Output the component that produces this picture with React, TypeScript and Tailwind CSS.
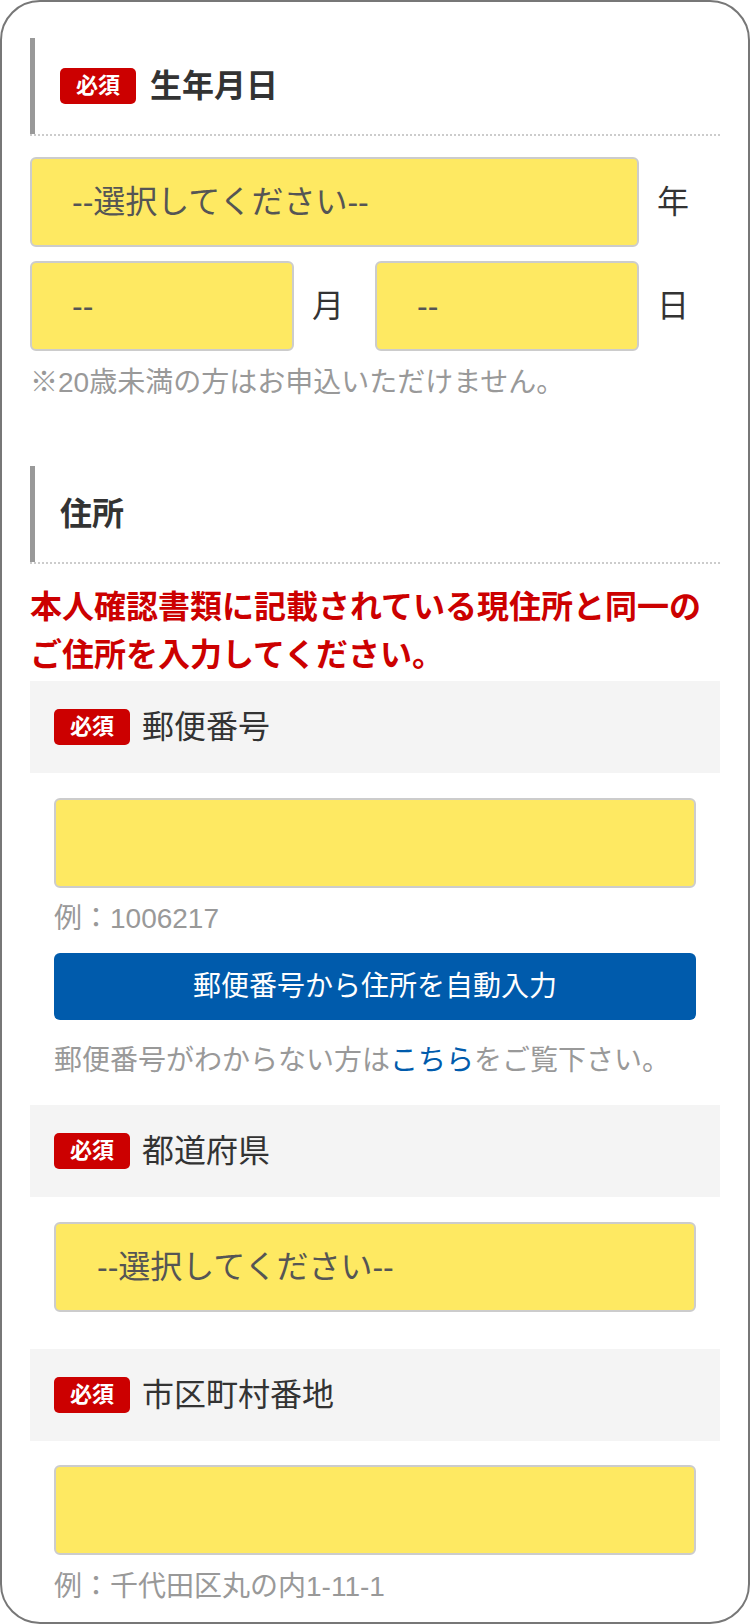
const FONT = { fontFamily: '"Liberation Sans", "Noto Sans CJK JP", sans-serif' };

const Badge = () => (
  <span className="flex h-[36px] w-[76px] shrink-0 items-center justify-center rounded-[5px] bg-[#cc0000] text-[22px] font-bold leading-none text-white">
    必須
  </span>
);

const SectionHeading = ({ title, required }: { title: string; required?: boolean }) => (
  <div className="flex border-b-2 border-dotted border-[#cccccc]">
    <div className="w-[5px] shrink-0 bg-[#999999]" />
    <div className="flex h-[96px] items-center gap-[14px] pl-[25px]">
      {required && <Badge />}
      <span className="text-[32px] font-bold text-[#333333]">{title}</span>
    </div>
  </div>
);

const Field = ({ text, pad = "pl-[40px]" }: { text?: string; pad?: string }) => (
  <div className={`flex h-[90px] min-w-0 flex-1 items-center rounded-[6px] border-2 border-[#cccccc] bg-[#fee962] ${pad} text-[32px] text-[#555555]`}>
    {text}
  </div>
);

const Unit = ({ label }: { label: string }) => (
  <span className="w-[81px] shrink-0 pl-[18px] text-[32px] text-[#333333]">{label}</span>
);

const ItemHeader = ({ label }: { label: string }) => (
  <div className="flex h-[92px] items-center gap-[12px] bg-[#f4f4f4] px-[24px]">
    <Badge />
    <span className="text-[32px] text-[#333333]">{label}</span>
  </div>
);

const Hint = ({ children, className = "" }: { children: React.ReactNode; className?: string }) => (
  <p className={`text-[28px] leading-[42px] text-[#999999] ${className}`}>{children}</p>
);

const App = () => {
  return (
    <div className="bg-white" style={FONT}>
      <div className="box-border h-[1624px] w-[750px] overflow-hidden rounded-[40px] border-2 border-[#777777] px-[28px] pt-[36px]">
        {/* 生年月日 */}
        <SectionHeading title="生年月日" required />

        <div className="mt-[21px] flex items-center">
          <Field text="--選択してください--" />
          <Unit label="年" />
        </div>
        <div className="mt-[14px] flex items-center">
          <Field text="--" />
          <Unit label="月" />
          <Field text="--" />
          <Unit label="日" />
        </div>
        <Hint className="mt-[11px]">※20歳未満の方はお申込いただけません。</Hint>

        {/* 住所 */}
        <div className="mt-[62px]">
          <SectionHeading title="住所" />
        </div>
        <p className="mt-[19px] text-[32px] font-bold leading-[48px] text-[#cc0000]">
          本人確認書類に記載されている現住所と同一のご住所を入力してください。
        </p>

        <div className="mt-[2px]">
          <ItemHeader label="郵便番号" />
        </div>
        <div className="mx-[24px]">
          <div className="mt-[25px] flex">
            <Field />
          </div>
          <Hint className="mt-[10px]">例：1006217</Hint>
          <button className="mt-[13px] flex h-[67px] w-full items-center justify-center rounded-[6px] bg-[#005bac] text-[28px] text-white">
            郵便番号から住所を自動入力
          </button>
          <Hint className="mt-[20px]">
            郵便番号がわからない方は<a className="text-[#005bac]">こちら</a>をご覧下さい。
          </Hint>
        </div>

        <div className="mt-[23px]">
          <ItemHeader label="都道府県" />
        </div>
        <div className="mx-[24px] mt-[25px] flex">
          <Field text="--選択してください--" pad="pl-[41px]" />
        </div>

        <div className="mt-[37px]">
          <ItemHeader label="市区町村番地" />
        </div>
        <div className="mx-[24px]">
          <div className="mt-[24px] flex">
            <Field />
          </div>
          <Hint className="mt-[11px]">例：千代田区丸の内1-11-1</Hint>
        </div>
      </div>
    </div>
  );
};

export default App;
